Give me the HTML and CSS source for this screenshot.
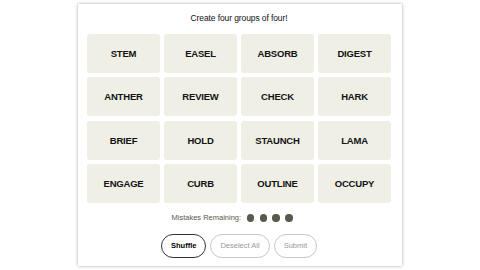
FILE: index.html
```html
<!DOCTYPE html>
<html lang="en">
  <head>
    <meta charset="UTF-8" />
    <title>Connections</title>
    <link rel="stylesheet" href="styles.css">
  </head>
  <body>
    <main class="board">
      <p class="board-title">Create four groups of four!</p>
      <div class="tiles">
        <div class="tile">STEM</div>
        <div class="tile">EASEL</div>
        <div class="tile">ABSORB</div>
        <div class="tile">DIGEST</div>
        <div class="tile">ANTHER</div>
        <div class="tile">REVIEW</div>
        <div class="tile">CHECK</div>
        <div class="tile">HARK</div>
        <div class="tile">BRIEF</div>
        <div class="tile">HOLD</div>
        <div class="tile">STAUNCH</div>
        <div class="tile">LAMA</div>
        <div class="tile">ENGAGE</div>
        <div class="tile">CURB</div>
        <div class="tile">OUTLINE</div>
        <div class="tile">OCCUPY</div>
      </div>
      <div class="mistakes">
        <span>Mistakes Remaining:</span>
        <span class="dots">
          <span class="dot"></span>
          <span class="dot"></span>
          <span class="dot"></span>
          <span class="dot"></span>
        </span>
      </div>
      <div class="actions">
        <button class="pill pill-active">Shuffle</button>
        <button class="pill">Deselect All</button>
        <button class="pill">Submit</button>
      </div>
    </main>
  </body>
</html>
```

FILE: styles.css
```css
* {
  box-sizing: border-box;
  margin: 0;
  padding: 0;
}

html,
body {
  width: 100%;
  height: 100%;
  overflow: hidden;
}

body {
  font-family: "Liberation Sans", Arial, sans-serif;
  background: #ffffff;
  color: #000000;
}

.board {
  width: 324px;
  height: 262px;
  margin: 4px auto 0;
  padding: 8px 11px 0 9px;
  background: #ffffff;
  box-shadow: 0 0 3px rgba(0, 0, 0, 0.35);
  display: flex;
  flex-direction: column;
  align-items: center;
}

.board-title {
  font-size: 8.5px;
  line-height: 12px;
  height: 12px;
  color: #111111;
  letter-spacing: -0.1px;
}

.tiles {
  margin-top: 10px;
  width: 304px;
  display: grid;
  grid-template-columns: repeat(4, 73px);
  grid-template-rows: repeat(4, 39px);
  column-gap: 4px;
  row-gap: 4.33px;
}

.tile {
  background: #efefe6;
  border-radius: 3px;
  display: flex;
  align-items: center;
  justify-content: center;
  font-weight: 700;
  font-size: 9.5px;
  letter-spacing: -0.2px;
  color: #121212;
}

/* the row sits a little left of centre */
.mistakes {
  margin-top: 10px;
  margin-right: 14px;
  height: 10px;
  display: flex;
  align-items: center;
  gap: 6px;
  font-size: 7.5px;
  color: #5a594e;
}

.dots {
  display: flex;
  gap: 5.3px;
}

.dot {
  width: 7.4px;
  height: 7.4px;
  border-radius: 50%;
  background: #5a594e;
}

.actions {
  margin-top: 11px;
  display: flex;
  gap: 4px;
}

.pill {
  height: 24px;
  padding: 0 9px;
  border-radius: 12px;
  border: 1px solid #c6c6c6;
  background: #ffffff;
  color: #999999;
  font-family: "Liberation Sans", Arial, sans-serif;
  font-size: 7.5px;
}

.pill-active {
  border-color: #333333;
  color: #000000;
  font-weight: 700;
}
```
